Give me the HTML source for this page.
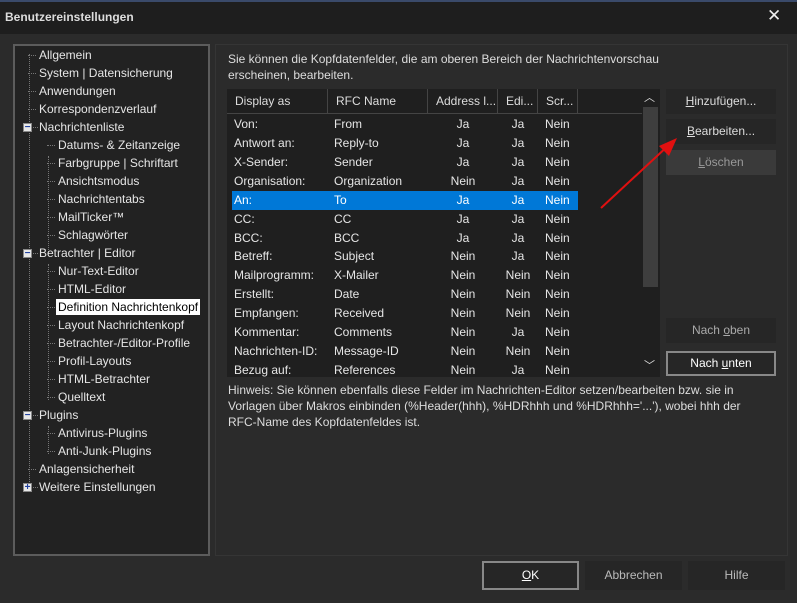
<!DOCTYPE html>
<html><head><meta charset="utf-8"><style>
*{margin:0;padding:0;box-sizing:border-box}
body{width:797px;height:603px;background:#2b2b2b;font-family:"Liberation Sans",sans-serif;font-size:12px;color:#e6e6e6;position:relative;overflow:hidden}
.a{position:absolute;white-space:nowrap}
.title{left:0;top:0;width:797px;height:34px;background:#1e1e1e;border-top:2px solid #3a4a6a}
.tree{left:13px;top:44px;width:197px;height:512px;background:#222;border:2px solid #5c5c5c}
.ti{position:absolute;height:16px;line-height:16px}
.vl{position:absolute;border-left:1px dotted #777}
.hl{position:absolute;border-top:1px dotted #777;width:8px}
.box{position:absolute;width:9px;height:9px;background:#e8e8e8;border:1px solid #888;color:#2040a0;font-size:10px;line-height:7px;text-align:center;font-weight:bold}
.right{left:215px;top:44px;width:573px;height:512px;border:1px solid #353535}
.tbl{left:227px;top:89px;width:433px;height:288px;background:#1f1f1f;overflow:hidden}
.hdr{position:absolute;top:0;height:25px;line-height:25px;border-right:1px solid #444;border-bottom:1px solid #444;padding-left:8px;color:#ddd;background:#1f1f1f}
.row{position:absolute;left:5px;width:346px;height:19px;line-height:19px}
.row span{position:absolute}
.btn{position:absolute;background:#262626;text-align:center;line-height:25px;color:#ddd}
</style></head><body>
<div class="a title"></div>
<div class="a" style="left:5px;top:10px;font-weight:bold;font-size:12px;color:#ddd">Benutzereinstellungen</div>
<div class="a" style="left:767px;top:6px;font-size:17px;color:#eee">✕</div>

<div class="a tree">
<div class="vl" style="left:14px;top:8px;height:430px"></div>
<div class="vl" style="left:33px;top:110px;height:100px"></div>
<div class="vl" style="left:33px;top:218px;height:136px"></div>
<div class="vl" style="left:33px;top:380px;height:28px"></div>
</div>
<div class="a" style="left:13px;top:44px;width:197px;height:512px">
<div id="t"></div>
</div>
<script>
var items=[[0,"Allgemein"],[0,"System | Datensicherung"],[0,"Anwendungen"],[0,"Korrespondenzverlauf"],[0,"Nachrichtenliste","-"],[1,"Datums- & Zeitanzeige"],[1,"Farbgruppe | Schriftart"],[1,"Ansichtsmodus"],[1,"Nachrichtentabs"],[1,"MailTicker™"],[1,"Schlagwörter"],[0,"Betrachter | Editor","-"],[1,"Nur-Text-Editor"],[1,"HTML-Editor"],[1,"Definition Nachrichtenkopf","s"],[1,"Layout Nachrichtenkopf"],[1,"Betrachter-/Editor-Profile"],[1,"Profil-Layouts"],[1,"HTML-Betrachter"],[1,"Quelltext"],[0,"Plugins","-"],[1,"Antivirus-Plugins"],[1,"Anti-Junk-Plugins"],[0,"Anlagensicherheit"],[0,"Weitere Einstellungen","+"]];
var h="";
items.forEach(function(it,i){var y=3+i*18;var x=it[0]?45:26;
if(it[2]=="-"||it[2]=="+")h+='<div class="box" style="left:10px;top:'+(y+4)+'px">'+(it[2]=="-"?"−":"+")+'</div><div class="hl" style="left:20px;top:'+(y+8)+'px;width:5px"></div>';
else h+='<div class="hl" style="left:'+(it[0]?34:15)+'px;top:'+(y+8)+'px"></div>';
h+='<div class="ti" style="left:'+x+'px;top:'+y+'px;'+(it[2]=="s"?'background:#fff;color:#000;padding:0 2px;margin-left:-2px':'')+'">'+it[1].replace(/&/g,"&amp;")+'</div>';});
document.getElementById("t").innerHTML=h;
</script>

<div class="a right"></div>
<div class="a" style="left:228px;top:51px;line-height:16px;color:#ddd">Sie können die Kopfdatenfelder, die am oberen Bereich der Nachrichtenvorschau<br>erscheinen, bearbeiten.</div>

<div class="a tbl">
<div class="hdr" style="left:0;width:101px">Display as</div>
<div class="hdr" style="left:101px;width:100px">RFC Name</div>
<div class="hdr" style="left:201px;width:70px">Address l...</div>
<div class="hdr" style="left:271px;width:40px">Edi...</div>
<div class="hdr" style="left:311px;width:40px">Scr...</div>
<div class="hdr" style="left:351px;width:64px;border-right:none"></div>
<div id="rows"></div>
<div style="position:absolute;left:415px;top:0;width:18px;height:288px;background:#1f1f1f"></div>
<div style="position:absolute;left:416px;top:18px;width:15px;height:180px;background:#3e3e3e"></div>
<div style="position:absolute;left:417px;top:0;color:#ddd;font-size:11px">︿</div>
<div style="position:absolute;left:417px;top:268px;color:#ddd;font-size:11px">﹀</div>
</div>
<script>
var r=[["Von:","From","Ja","Ja","Nein"],["Antwort an:","Reply-to","Ja","Ja","Nein"],["X-Sender:","Sender","Ja","Ja","Nein"],["Organisation:","Organization","Nein","Ja","Nein"],["An:","To","Ja","Ja","Nein"],["CC:","CC","Ja","Ja","Nein"],["BCC:","BCC","Ja","Ja","Nein"],["Betreff:","Subject","Nein","Ja","Nein"],["Mailprogramm:","X-Mailer","Nein","Nein","Nein"],["Erstellt:","Date","Nein","Nein","Nein"],["Empfangen:","Received","Nein","Nein","Nein"],["Kommentar:","Comments","Nein","Ja","Nein"],["Nachrichten-ID:","Message-ID","Nein","Nein","Nein"],["Bezug auf:","References","Nein","Ja","Nein"]];
var s="";r.forEach(function(d,i){var y=Math.round(26+i*18.92);
s+='<div class="row" style="top:'+y+'px;'+(i==4?'background:#0078d7;color:#fff':'')+'"><span style="left:2px">'+d[0]+'</span><span style="left:102px">'+d[1]+'</span><span style="left:196px;width:70px;text-align:center">'+d[2]+'</span><span style="left:266px;width:40px;text-align:center">'+d[3]+'</span><span style="left:313px">'+d[4]+'</span></div>';});
document.getElementById("rows").innerHTML=s;
</script>

<div class="btn" style="left:666px;top:89px;width:110px;height:25px"><u>H</u>inzufügen...</div>
<div class="btn" style="left:666px;top:119px;width:110px;height:25px"><u>B</u>earbeiten...</div>
<div class="btn" style="left:666px;top:150px;width:110px;height:25px;background:#3a3a3a;color:#999"><u>L</u>öschen</div>
<div class="btn" style="left:666px;top:318px;width:110px;height:25px;color:#aaa">Nach <u>o</u>ben</div>
<div class="btn" style="left:666px;top:351px;width:110px;height:25px;border:2px solid #888;line-height:21px;color:#fff">Nach <u>u</u>nten</div>

<div class="a" style="left:228px;top:382px;line-height:16px;color:#ddd">Hinweis: Sie können ebenfalls diese Felder im Nachrichten-Editor setzen/bearbeiten bzw. sie in<br>Vorlagen über Makros einbinden (%Header(hhh), %HDRhhh und %HDRhhh='...'), wobei hhh der<br>RFC-Name des Kopfdatenfeldes ist.</div>

<svg class="a" style="left:595px;top:130px" width="90" height="85"><line x1="6" y1="78" x2="75" y2="14" stroke="#e01010" stroke-width="2"/><polygon points="82,8 64,16 74,26" fill="#e01010"/></svg>

<div class="btn" style="left:482px;top:561px;width:97px;height:29px;border:2px solid #888;line-height:25px;color:#fff"><u>O</u>K</div>
<div class="btn" style="left:585px;top:561px;width:97px;height:29px;line-height:29px;color:#bbb">Abbrechen</div>
<div class="btn" style="left:688px;top:561px;width:97px;height:29px;line-height:29px;color:#bbb">Hilfe</div>
</body></html>
